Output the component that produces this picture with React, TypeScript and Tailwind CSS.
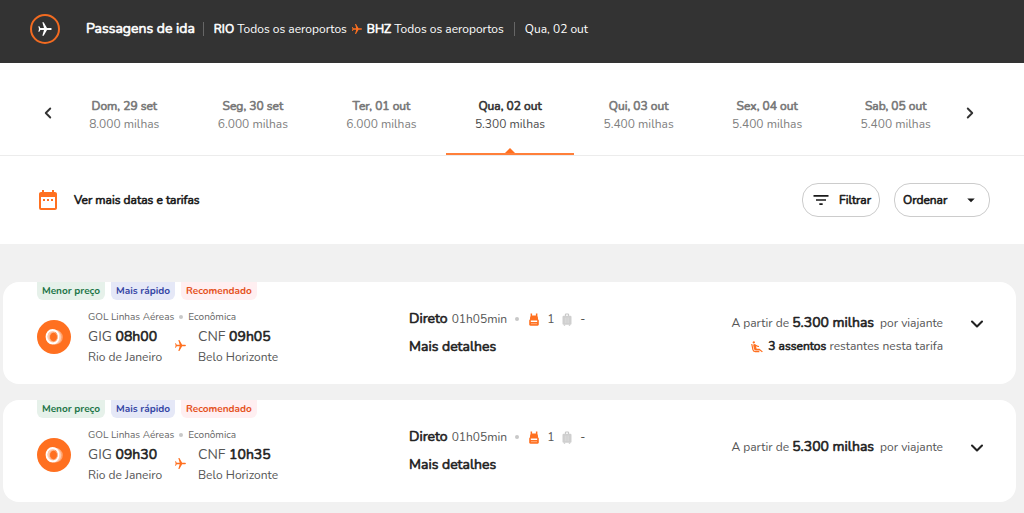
import React from "react";
import clsx from "clsx";
import {
  MdAirlineSeatReclineExtra,
  MdAirplanemodeActive,
  MdArrowDropDown,
  MdDateRange,
  MdFilterList,
} from "react-icons/md";
import { ChevronDown, ChevronLeft, ChevronRight } from "lucide-react";

const days = [
  { label: "Dom, 29 set", miles: "8.000" },
  { label: "Seg, 30 set", miles: "6.000" },
  { label: "Ter, 01 out", miles: "6.000" },
  { label: "Qua, 02 out", miles: "5.300" },
  { label: "Qui, 03 out", miles: "5.400" },
  { label: "Sex, 04 out", miles: "5.400" },
  { label: "Sab, 05 out", miles: "5.400" },
];

const tags = [
  { label: "Menor preço", className: "bg-[#e6f1ea] text-[#1c7547]" },
  { label: "Mais rápido", className: "bg-[#e5e8f7] text-[#3444a4]" },
  { label: "Recomendado", className: "bg-[#ffeff1] text-[#e5511c]" },
];

const flights = [
  { departure: "08h00", arrival: "09h05", seats: 3 },
  { departure: "09h30", arrival: "10h35", seats: 0 },
];

type Flight = (typeof flights)[number];

// regular weight thickened with a stroke, so emphasis keeps the regular widths
const strong = "font-normal [-webkit-text-stroke:0.6px_currentColor]";

const Dot = () => <span className="size-1 rounded-full bg-[#c8c8c8]" />;

const GolLogo = () => (
  <svg viewBox="0 0 34 34" className="size-[34px] shrink-0" aria-hidden="true">
    <circle cx="17" cy="17" r="17" fill="#ff7020" />
    <ellipse cx="19" cy="17.3" rx="5.8" ry="6.2" fill="none" stroke="#ffa673" strokeWidth="2" />
    <ellipse cx="17.4" cy="17.1" rx="5.9" ry="6.3" fill="none" stroke="#ffcdb2" strokeWidth="2" />
    <ellipse cx="15.6" cy="16.7" rx="6" ry="6.8" fill="none" stroke="#fff" strokeWidth="2" />
    <ellipse cx="16.5" cy="17" rx="4" ry="4.7" fill="#ff7020" stroke="#ffc5a4" strokeWidth="0.7" />
  </svg>
);

const Backpack = () => (
  <svg viewBox="0 0 10 13" className="h-[13px] w-[10px]" fill="#ff7020" aria-hidden="true">
    <path d="M1.6.4h1.5v2.2h3.8V.4h1.5v2.7c.4.6.6 1.4.6 2.3V7H1V5.4c0-.9.2-1.7.6-2.3z" />
    <path
      fillRule="evenodd"
      d="M1 6.5h8c.5 0 .8.4.8.9v4.1c0 .7-.5 1.2-1.200 1.200H1.400c-.7 0-1.200-.5-1.200-1.200V7.400c0-.5.3-.9.8-.9zM1.800 7.600v1.500h6.400V7.600z"
    />
    <path d="M2 10.7h6" stroke="#ffd3ba" strokeWidth="0.6" />
  </svg>
);

const Suitcase = () => (
  <svg viewBox="0 0 10 13" className="h-[13px] w-[10px]" aria-hidden="true">
    <path d="M3.4 3V1h3.2v2" fill="none" stroke="#c4c4c4" strokeWidth="1" />
    <rect x="0.5" y="2.8" width="9" height="9" rx="1.2" fill="#cfcfcf" />
    <path d="M3.3 4.5v5.7M5 4.5v5.7M6.7 4.5v5.7" stroke="#e0e0e0" strokeWidth="0.6" />
    <path d="M1.8 12.2h1.4M6.8 12.2h1.4" stroke="#c4c4c4" strokeWidth="1" />
  </svg>
);

const Header = () => (
  <header className="flex items-center bg-[#333] pt-3.5 pb-[19px] pl-[30px] text-xs text-white">
    <span className="grid size-[30px] place-items-center rounded-full border-2 border-[#f26b21]">
      <MdAirplanemodeActive size={16} className="rotate-90" />
    </span>
    <h1 className={clsx("ml-[26px] text-sm", strong)}>Passagens de ida</h1>
    <div className="ml-2 flex h-3.5 items-center gap-1 border-l border-[#666] pl-2.5">
      <p>
        <b className={strong}>RIO</b> Todos os aeroportos
      </p>
      <MdAirplanemodeActive size={12} className="rotate-90 text-[#ff7020]" />
      <p>
        <b className={strong}>BHZ</b> Todos os aeroportos
      </p>
    </div>
    <p className="ml-2.5 flex h-3.5 items-center border-l border-[#666] pl-2.5">
      Qua, 02 out
    </p>
  </header>
);

const DateTabs = () => {
  const [selected, setSelected] = React.useState(3);

  return (
    <nav className="flex h-[93px] items-stretch border-b border-[#ececec] bg-white pr-11 pl-9">
      <button aria-label="Datas anteriores" className="grid w-6 place-items-center pt-2 text-[#333]">
        <ChevronLeft size={18} strokeWidth={2.5} />
      </button>
      <div className="grid flex-1 grid-cols-7">
        {days.map((day, index) => {
          const active = index === selected;
          return (
            <button
              key={day.label}
              onClick={() => setSelected(index)}
              className={clsx(
                "relative border-b-2 pt-3.5 text-xs leading-[18px]",
                active ? "border-[#ff7f3a] text-[#4d4d4d]" : "border-transparent text-[#808080]"
              )}
            >
              <span className={clsx("block", strong, active ? "text-[#333]" : "text-[#777]")}>
                {day.label}
              </span>
              <span className="block">{day.miles} milhas</span>
              {active && (
                <svg
                  viewBox="0 0 10 5"
                  className="absolute bottom-0 left-1/2 h-[5px] w-2.5 -translate-x-1/2"
                  fill="#ff7020"
                  aria-hidden="true"
                >
                  <path d="M5 0l5 5H0z" />
                </svg>
              )}
            </button>
          );
        })}
      </div>
      <button aria-label="Próximas datas" className="grid w-5 place-items-center pt-2 text-[#333]">
        <ChevronRight size={18} strokeWidth={2.5} />
      </button>
    </nav>
  );
};

const Toolbar = () => (
  <div className="flex h-[88px] items-center bg-white pr-[34px] pl-9 text-xs text-[#1a1a1a]">
    <button className="flex items-center gap-3.5">
      <MdDateRange size={24} className="text-[#ff7020]" />
      <span className={strong}>Ver mais datas e tarifas</span>
    </button>
    <button className="ml-auto flex h-[34px] items-center gap-2 rounded-2xl border border-[#ccc] px-2">
      <MdFilterList size={20} />
      <span className={strong}>Filtrar</span>
    </button>
    <div className="relative ml-3.5">
      <select
        aria-label="Ordenar"
        className={clsx(
          "h-[34px] w-24 appearance-none rounded-2xl border border-[#ccc] bg-white pl-2",
          strong
        )}
      >
        <option>Ordenar</option>
      </select>
      <MdArrowDropDown size={18} className="pointer-events-none absolute top-2 right-2.5" />
    </div>
  </div>
);

const FlightCard = ({ flight }: { flight: Flight }) => (
  <article className="flex h-[102px] rounded-2xl bg-white pr-[29px] pl-[34px] text-[#555]">
    <div className="w-[372px]">
      <div className="flex gap-1.5">
        {tags.map((tag) => (
          <span
            key={tag.label}
            className={clsx("rounded-b-md px-[5px] text-[10px] leading-[18px] font-bold", tag.className)}
          >
            {tag.label}
          </span>
        ))}
      </div>
      <div className="mt-[7px] flex items-center gap-[17px]">
        <GolLogo />
        <div>
          <p className="flex items-center gap-[5px] text-[10px] leading-5 text-[#666]">
            GOL Linhas Aéreas <Dot /> Econômica
          </p>
          <div className="flex items-center">
            <div className="w-[86px] text-xs leading-5">
              <p className="text-sm leading-5">
                GIG <b className={clsx("text-[#222]", strong)}>{flight.departure}</b>
              </p>
              <p>Rio de Janeiro</p>
            </div>
            <MdAirplanemodeActive size={13} className="mb-1 rotate-90 text-[#ff7020]" />
            <div className="ml-[11px] text-xs leading-5">
              <p className="text-sm leading-5">
                CNF <b className={clsx("text-[#222]", strong)}>{flight.arrival}</b>
              </p>
              <p>Belo Horizonte</p>
            </div>
          </div>
        </div>
      </div>
    </div>
    <div className="pt-[27px]">
      <div className="flex items-center text-xs leading-5">
        <b className={clsx("mr-1 text-sm text-[#222]", strong)}>Direto</b>
        01h05min
        <span className="mr-2.5 ml-2 flex">
          <Dot />
        </span>
        <Backpack />
        <span className="mx-2">1</span>
        <Suitcase />
        <span className="ml-2">-</span>
      </div>
      <button className={clsx("mt-2 block text-sm leading-5 text-[#222]", strong)}>
        Mais detalhes
      </button>
    </div>
    <div className={clsx("ml-auto flex items-start gap-6", flight.seats ? "pt-[30px]" : "pt-9")}>
      <div className="text-right text-xs leading-[23px]">
        <p>
          A partir de{" "}
          <b className={clsx("text-sm leading-5 text-[#222]", strong)}>5.300 milhas</b>
          <span className="ml-1.5">por viajante</span>
        </p>
        {flight.seats > 0 && (
          <p className="flex items-center justify-end gap-1">
            <MdAirlineSeatReclineExtra size={14} className="text-[#ff7020]" />
            <span>
              <b className={clsx("text-[#222]", strong)}>{flight.seats} assentos</b> restantes nesta
              tarifa
            </span>
          </p>
        )}
      </div>
      <button aria-label="Expandir voo" className="pt-0.5 text-[#222]">
        <ChevronDown size={20} strokeWidth={2.5} />
      </button>
    </div>
  </article>
);

export default function App() {
  return (
    <div className="min-h-screen bg-[#f1f1f1] font-['Nunito','Lato',sans-serif]">
      <Header />
      <DateTabs />
      <Toolbar />
      <main className="flex flex-col gap-4 pt-[38px] pr-2 pb-[11px] pl-[3px]">
        {flights.map((flight) => (
          <FlightCard key={flight.departure} flight={flight} />
        ))}
      </main>
    </div>
  );
}
